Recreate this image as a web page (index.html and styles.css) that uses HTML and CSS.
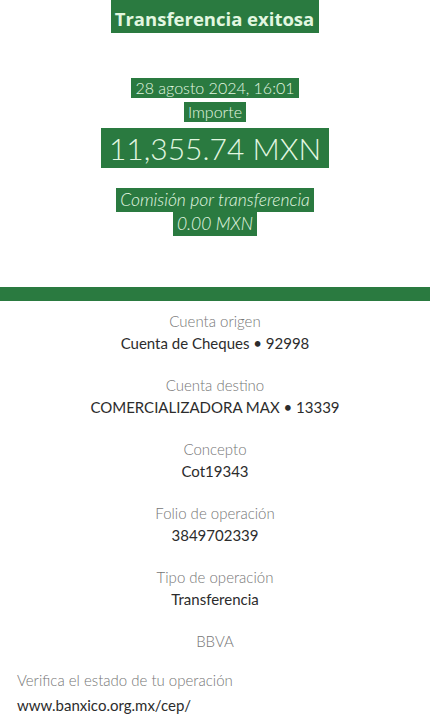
FILE: index.html
```html
<!DOCTYPE html>
<html lang="es">
<head>
<meta charset="utf-8">
<link rel="stylesheet" href="styles.css">
</head>
<body>
<header class="hero">
  <div class="title-row"><span class="hl title">Transferencia exitosa</span></div>
  <div class="date-row"><span class="hl date">28 agosto 2024, 16:01</span></div>
  <div class="label-row"><span class="hl label">Importe</span></div>
  <div class="amount-row"><span class="hl amount">11,355.74 MXN</span></div>
  <div class="fee-row first"><span class="hl fee">Comisión por transferencia</span></div>
  <div class="fee-row"><span class="hl fee">0.00 MXN</span></div>
</header>
<div class="bar"></div>
<main class="details">
  <div class="item"><div class="k">Cuenta origen</div><div class="v">Cuenta de Cheques • 92998</div></div>
  <div class="item"><div class="k">Cuenta destino</div><div class="v">COMERCIALIZADORA MAX • 13339</div></div>
  <div class="item"><div class="k">Concepto</div><div class="v">Cot19343</div></div>
  <div class="item"><div class="k">Folio de operación</div><div class="v">3849702339</div></div>
  <div class="item"><div class="k">Tipo de operación</div><div class="v">Transferencia</div></div>
  <div class="bank">BBVA</div>
</main>
<footer class="foot">
  <div class="k">Verifica el estado de tu operación</div>
  <div class="v">www.banxico.org.mx/cep/</div>
</footer>
</body>
</html>
```
FILE: styles.css
```css
html, body {
  margin: 0;
  padding: 0;
  background: #fff;
  font-family: Lato, "Open Sans", sans-serif;
}
.hero {
  display: flex;
  flex-direction: column;
  align-items: center;
  text-align: center;
  height: 287px;
}
.hl {
  background: #2a7a40;
  color: #e2f7e0;
  display: inline-block;
}
.title {
  font-family: "Open Sans", sans-serif;
  font-weight: 700;
  font-size: 18.5px;
  line-height: 28px;
  padding: 5px 5px 0 4px;
}
.date-row { margin-top: 45px; }
.date {
  font-weight: 300;
  font-size: 16px;
  line-height: 20px;
  padding: 0 4px;
}
.label-row { margin-top: 4px; }
.label {
  font-weight: 300;
  font-size: 16px;
  line-height: 20px;
  padding: 0 4px;
}
.amount-row { margin-top: 6px; }
.amount {
  font-weight: 300;
  font-size: 30px;
  line-height: 40px;
  padding: 0 8px;
}
.fee-row.first { margin-top: 20px; }
.fee {
  font-weight: 300;
  font-style: italic;
  font-size: 17.5px;
  line-height: 24px;
  padding: 0 4px;
}
.bar {
  height: 14px;
  background: #2a7a40;
}
.details {
  display: flex;
  flex-direction: column;
  align-items: center;
  text-align: center;
  padding-top: 9px;
  gap: 20px;
}
.item {
  display: flex;
  flex-direction: column;
}
.k {
  color: #767676;
  font-weight: 300;
  font-size: 15px;
  line-height: 22px;
}
.v {
  color: #2c2c2c;
  font-weight: 400;
  font-size: 15px;
  line-height: 22px;
}
.bank {
  color: #767676;
  font-weight: 300;
  font-size: 15px;
  line-height: 22px;
}
.foot {
  display: flex;
  flex-direction: column;
  gap: 3px;
  padding: 17px 17px 0;
}
```
